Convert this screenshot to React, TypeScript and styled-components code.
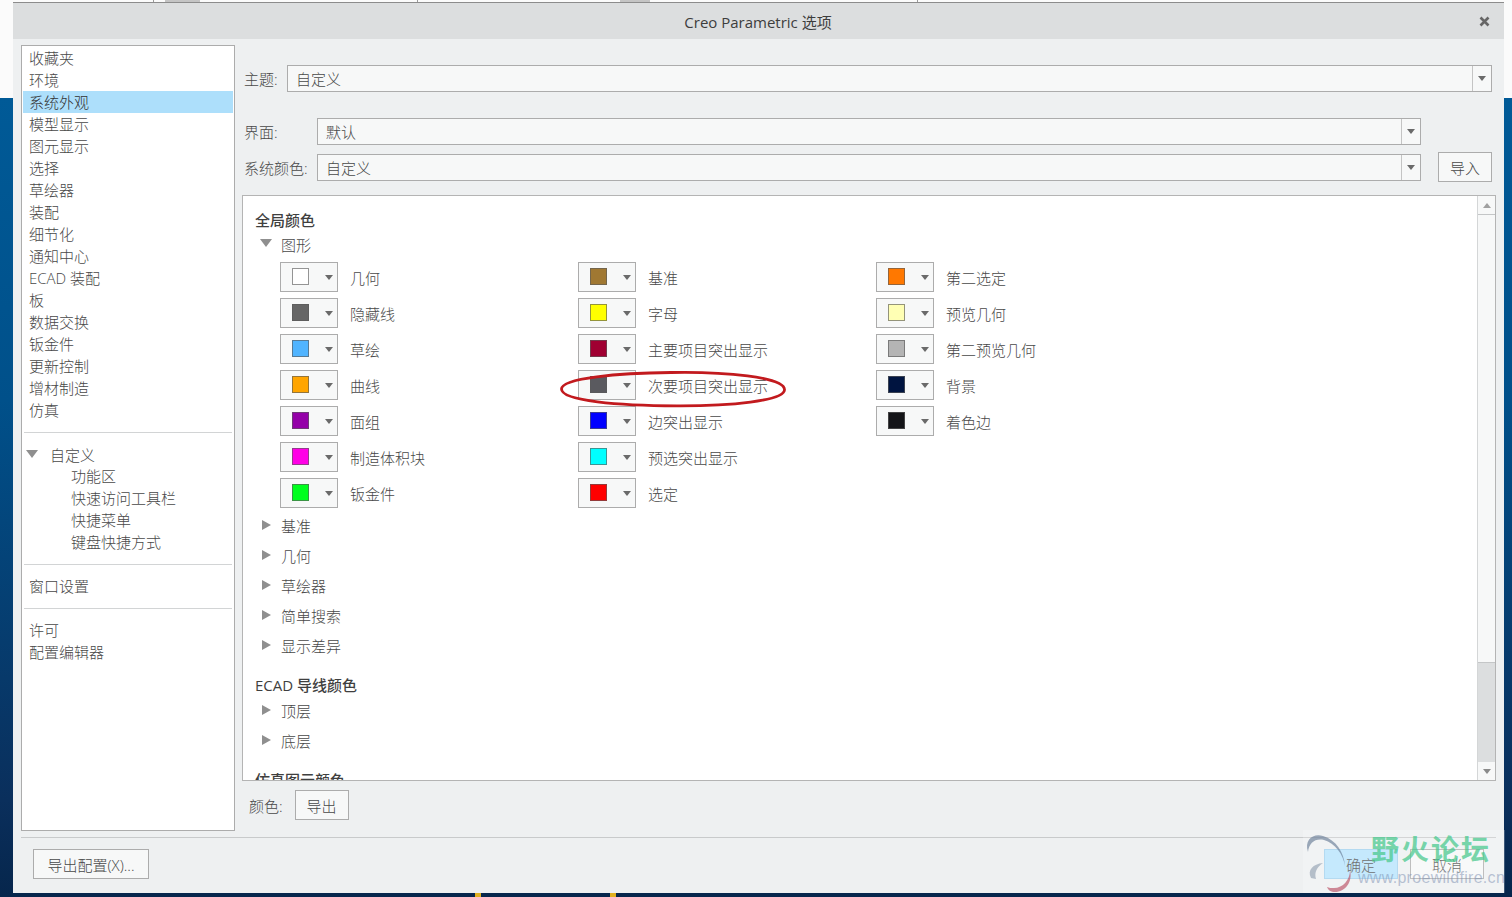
import React from "react";
import styled, { createGlobalStyle } from "styled-components";

const FONT = `"Open Sans", "Noto Sans CJK SC", "Noto Sans", sans-serif`;

const Global = createGlobalStyle`
  html, body { margin: 0; padding: 0; background: #fff; }
  #root { width: 1512px; height: 897px; overflow: hidden; }
  * { box-sizing: border-box; }
`;

const Desktop = styled.div`
  width: 1512px;
  height: 897px;
  padding: 2px 8px 4px 13px;
  position: relative;
  overflow: hidden;
  font-family: ${FONT};
  font-weight: 300;
  font-size: 15px;
  color: #484848;
  background:
    linear-gradient(#9a9a9a, #9a9a9a) 153px 0 / 1px 2px no-repeat,
    linear-gradient(#c4c4c4, #c4c4c4) 165px 0 / 35px 2px no-repeat,
    linear-gradient(#9a9a9a, #9a9a9a) 417px 0 / 1px 2px no-repeat,
    linear-gradient(#c4c4c4, #c4c4c4) 620px 0 / 30px 2px no-repeat,
    linear-gradient(#9a9a9a, #9a9a9a) 917px 0 / 1px 2px no-repeat,
    linear-gradient(#e0b020, #e0b020) 475px 893px / 6px 4px no-repeat,
    linear-gradient(#e0b020, #e0b020) 610px 893px / 6px 4px no-repeat,
    linear-gradient(#fbfbfb 0, #fbfbfb 98px, #005a97 98px, #00508a 400px, #0a2f5c 800px, #06264c 897px);
`;

const Dialog = styled.div`
  width: 1491px;
  height: 891px;
  background: #eef0f1;
  border-top: 1px solid #8c8c8c;
  display: flex;
  flex-direction: column;
`;

const TitleBar = styled.div`
  height: 36px;
  flex: none;
  background: #dcdedf;
  display: flex;
  align-items: center;
  justify-content: center;
  position: relative;
  color: #3d3d3d;
  font-weight: 400;
  font-size: 15px;
  padding-right: 1px;
`;

const CloseIcon = styled.svg`
  position: absolute;
  right: 14px;
  top: 13px;
  width: 11px;
  height: 11px;
`;

const Body = styled.div`
  flex: none;
  height: 786px;
  margin-top: 6px;
  padding: 0 8px;
  display: grid;
  grid-template-columns: 214px 1fr;
  column-gap: 7px;
`;

const Sidebar = styled.nav`
  background: #fff;
  border: 1px solid #acacac;
  padding: 1px;
  display: flex;
  flex-direction: column;
`;

const NavItem = styled.div<{ $level?: number; $selected?: boolean }>`
  height: 22px;
  flex: none;
  line-height: 22px;
  padding-left: ${(p) => (p.$level === 2 ? 48 : p.$level === 1 ? 27 : 6)}px;
  background: ${(p) => (p.$selected ? "#addffb" : "transparent")};
  color: ${(p) => (p.$selected ? "#333" : "#484848")};
  white-space: nowrap;
  position: relative;
`;

const NavParent = styled(NavItem)`
  height: 21px;
  margin-top: 1px;
`;

const NavRule = styled.div`
  flex: none;
  height: 1px;
  background: #d2d4d5;
  margin: 11px 1px 10px 1px;
`;

const Caret = styled.span<{ $left?: number }>`
  position: absolute;
  left: ${(p) => p.$left ?? 3}px;
  top: 6px;
  width: 0;
  height: 0;
  border-left: 6px solid transparent;
  border-right: 6px solid transparent;
  border-top: 8px solid #8f8f8f;
`;

const Main = styled.section`
  display: flex;
  flex-direction: column;
  min-width: 0;
`;

const FieldRow = styled.div<{ $top: number; $labelWidth: number; $right?: number }>`
  display: grid;
  grid-template-columns: ${(p) => p.$labelWidth}px 1fr auto;
  align-items: center;
  margin-top: ${(p) => p.$top}px;
  padding-left: 2px;
  margin-right: ${(p) => p.$right ?? 4}px;
  height: 27px;
  flex: none;
`;

const Label = styled.span`
  white-space: nowrap;
`;

const Select = styled.div`
  height: 27px;
  border: 1px solid #acacac;
  background: #f7f8f8;
  display: flex;
  align-items: center;
  padding-left: 8px;
  position: relative;
`;

const SelectArrow = styled.span`
  position: absolute;
  right: 0;
  top: 0;
  bottom: 0;
  width: 19px;
  border-left: 1px solid #c4c4c4;
  display: flex;
  align-items: center;
  justify-content: center;
  &::after {
    content: "";
    border-left: 4.5px solid transparent;
    border-right: 4.5px solid transparent;
    border-top: 5px solid #6a6a6a;
  }
`;

const Button = styled.button<{ $w: number; $primary?: boolean }>`
  width: ${(p) => p.$w}px;
  height: 30px;
  border: 1px solid ${(p) => (p.$primary ? "#9fd0ee" : "#acacac")};
  background: ${(p) => (p.$primary ? "#b5e3fd" : "#f7f8f8")};
  font: inherit;
  color: #484848;
  padding: 0;
  white-space: nowrap;
`;

const ImportButton = styled(Button)`
  margin-left: 17px;
`;

const Panel = styled.div`
  flex: none;
  height: 586px;
  margin-top: 16px;
  width: 1254px;
  border: 1px solid #b4b4b4;
  background: #fff;
  position: relative;
  display: grid;
  grid-template-columns: 1fr 18px;
  overflow: hidden;
`;

const Tree = styled.div`
  padding: 13px 0 0 12px;
  overflow: hidden;
  min-width: 0;
`;

const Heading = styled.div<{ $top?: number; $h?: number }>`
  font-weight: 500;
  height: ${(p) => p.$h ?? 23}px;
  line-height: ${(p) => p.$h ?? 22}px;
  color: #3f3f3f;
  margin-top: ${(p) => p.$top ?? 0}px;
  white-space: nowrap;
`;

const TreeRow = styled.div<{ $h?: number; $open?: boolean }>`
  height: ${(p) => p.$h ?? 30}px;
  display: flex;
  align-items: center;
  padding-left: ${(p) => (p.$open ? 5 : 7)}px;
  gap: ${(p) => (p.$open ? 9 : 8)}px;
`;

const OpenArrow = styled.span`
  width: 0;
  height: 0;
  border-left: 6px solid transparent;
  border-right: 6px solid transparent;
  border-top: 8px solid #8f8f8f;
  margin-top: -2px;
`;

const ClosedArrow = styled.span`
  width: 0;
  height: 0;
  border-top: 5.5px solid transparent;
  border-bottom: 5.5px solid transparent;
  border-left: 9px solid #8f8f8f;
  margin-top: -1px;
  margin-right: 2px;
`;

const ColorGrid = styled.div`
  display: grid;
  grid-template-columns: repeat(3, 298px);
  grid-template-rows: repeat(7, 30px);
  grid-auto-flow: column;
  row-gap: 6px;
  margin: 6px 0 2px 25px;
`;

const ColorItem = styled.div`
  display: flex;
  align-items: center;
  gap: 12px;
`;

const ColorButton = styled.div`
  width: 58px;
  height: 30px;
  border: 1px solid #acacac;
  background: #f7f8f8;
  display: flex;
  align-items: center;
  padding-left: 11px;
  position: relative;
  &::after {
    content: "";
    position: absolute;
    right: 4px;
    top: 12px;
    border-left: 4.5px solid transparent;
    border-right: 4.5px solid transparent;
    border-top: 5px solid #6a6a6a;
  }
`;

const Swatch = styled.span<{ $c: string }>`
  width: 17px;
  height: 17px;
  margin-top: -1px;
  background: ${(p) => p.$c};
  border: 1px solid rgba(90, 90, 90, 0.65);
`;

const Scrollbar = styled.div`
  display: flex;
  flex-direction: column;
  border-left: 1px solid #d4d6d7;
  background: #dcdedf;
`;

const ScrollEnd = styled.div<{ $up?: boolean }>`
  height: 18px;
  flex: none;
  background: #f7f8f8;
  display: flex;
  align-items: center;
  justify-content: center;
  &::after {
    content: "";
    border-left: 4px solid transparent;
    border-right: 4px solid transparent;
    ${(p) => (p.$up ? "border-bottom: 5px solid #a0a0a0;" : "border-top: 5px solid #8a8a8a;")}
  }
`;

const ScrollThumb = styled.div`
  height: 449px;
  flex: none;
  background: #f7f8f8;
  border-top: 1px solid #c4c6c7;
  border-bottom: 1px solid #c4c6c7;
`;

const ScrollTrack = styled.div`
  flex: 1;
`;

const Ellipse = styled.svg`
  position: absolute;
  left: 316px;
  top: 174px;
  width: 228px;
  height: 38px;
  pointer-events: none;
`;

const ExportRow = styled.div`
  display: flex;
  align-items: center;
  margin-top: 9px;
  padding-left: 7px;
  gap: 12px;
`;

const ExportButton = styled(Button)`
  width: 54px;
  height: 30px;
`;

const Footer = styled.footer`
  flex: 1;
  margin: 6px 8px 0 8px;
  border-top: 1px solid #c8cacb;
  display: flex;
  align-items: flex-start;
  padding: 11px 12px 0 12px;
  gap: 12px;
`;

const Spacer = styled.div`
  flex: 1;
`;

const Watermark = styled.div`
  position: absolute;
  left: 1303px;
  top: 830px;
  width: 202px;
  height: 63px;
  background: rgba(255, 255, 255, 0.22);
  pointer-events: none;
`;

const WatermarkLogo = styled.svg`
  position: absolute;
  left: 0;
  top: 0;
  width: 70px;
  height: 63px;
`;

const WatermarkTitle = styled.div`
  position: absolute;
  left: 68px;
  top: 0px;
  font-family: "Noto Sans CJK SC", sans-serif;
  font-weight: 700;
  font-size: 28px;
  line-height: 36px;
  letter-spacing: 2px;
  color: rgba(70, 200, 140, 0.72);
  white-space: nowrap;
`;

const WatermarkUrl = styled.div`
  position: absolute;
  left: 55px;
  top: 38px;
  font-family: "Liberation Sans", sans-serif;
  font-size: 16px;
  line-height: 20px;
  letter-spacing: 0.3px;
  color: rgba(120, 140, 175, 0.5);
  white-space: nowrap;
`;

const navA = ["收藏夹", "环境", "系统外观", "模型显示", "图元显示", "选择", "草绘器", "装配", "细节化", "通知中心", "ECAD 装配", "板", "数据交换", "钣金件", "更新控制", "增材制造", "仿真"];
const navB = ["功能区", "快速访问工具栏", "快捷菜单", "键盘快捷方式"];

const colors: [string, string][] = [
  ["#ffffff", "几何"], ["#666666", "隐藏线"], ["#50b4ff", "草绘"], ["#ffa500", "曲线"], ["#9400a8", "面组"], ["#ff00e6", "制造体积块"], ["#00ff1e", "钣金件"],
  ["#a07832", "基准"], ["#ffff00", "字母"], ["#a00032", "主要项目突出显示"], ["#5a5a5f", "次要项目突出显示"], ["#0000ff", "边突出显示"], ["#00ffff", "预选突出显示"], ["#ff0000", "选定"],
  ["#ff7800", "第二选定"], ["#ffffb4", "预览几何"], ["#b4b4b4", "第二预览几何"], ["#001440", "背景"], ["#141418", "着色边"],
];

const closedA = ["基准", "几何", "草绘器", "简单搜索", "显示差异"];
const closedB = ["顶层", "底层"];

export default function App() {
  return (
    <Desktop>
      <Global />
      <Dialog>
        <TitleBar>
          Creo Parametric 选项
          <CloseIcon viewBox="0 0 11 11">
            <path d="M1.5 1.5 L9.5 9.5 M9.5 1.5 L1.5 9.5" stroke="#666" strokeWidth="2.6" fill="none" />
          </CloseIcon>
        </TitleBar>
        <Body>
          <Sidebar>
            {navA.map((n, i) => (
              <NavItem key={n} $selected={i === 2}>{n}</NavItem>
            ))}
            <NavRule />
            <NavParent $level={1}><Caret />自定义</NavParent>
            {navB.map((n) => (
              <NavItem key={n} $level={2}>{n}</NavItem>
            ))}
            <NavRule />
            <NavItem>窗口设置</NavItem>
            <NavRule />
            <NavItem>许可</NavItem>
            <NavItem>配置编辑器</NavItem>
          </Sidebar>
          <Main>
            <FieldRow $top={20} $labelWidth={43}>
              <Label>主题:</Label>
              <Select>自定义<SelectArrow /></Select>
            </FieldRow>
            <FieldRow $top={26} $labelWidth={73} $right={75}>
              <Label>界面:</Label>
              <Select>默认<SelectArrow /></Select>
            </FieldRow>
            <FieldRow $top={7} $labelWidth={73} $right={4}>
              <Label>系统颜色:</Label>
              <Select>自定义<SelectArrow /></Select>
              <ImportButton $w={54}>导入</ImportButton>
            </FieldRow>
            <Panel>
              <Tree>
                <Heading>全局颜色</Heading>
                <TreeRow $h={24} $open><OpenArrow />图形</TreeRow>
                <ColorGrid>
                  {colors.map(([c, t]) => (
                    <ColorItem key={t}>
                      <ColorButton><Swatch $c={c} /></ColorButton>
                      {t}
                    </ColorItem>
                  ))}
                </ColorGrid>
                {closedA.map((t) => (
                  <TreeRow key={t}><ClosedArrow />{t}</TreeRow>
                ))}
                <Heading $top={16} $h={19}>ECAD 导线颜色</Heading>
                {closedB.map((t) => (
                  <TreeRow key={t}><ClosedArrow />{t}</TreeRow>
                ))}
                <Heading $top={14}>仿真图元颜色</Heading>
              </Tree>
              <Scrollbar>
                <ScrollEnd $up />
                <ScrollThumb />
                <ScrollTrack />
                <ScrollEnd />
              </Scrollbar>
              <Ellipse viewBox="0 0 228 38">
                <path d="M112 2.5 C165 1.5 225 7 225.5 19.5 C226 31 170 36 118 35.8 C60 35.6 2.5 31 2.5 19 C2.5 8 60 3 112 2.5 Z" fill="none" stroke="#c21a1e" strokeWidth="2.8" />
              </Ellipse>
            </Panel>
            <ExportRow>
              <Label>颜色:</Label>
              <ExportButton $w={54}>导出</ExportButton>
            </ExportRow>
          </Main>
        </Body>
        <Footer>
          <Button $w={116}>导出配置(X)...</Button>
          <Spacer />
          <Button $w={74} $primary>确定</Button>
          <Button $w={74}>取消</Button>
        </Footer>
      </Dialog>
      <Watermark>
        <WatermarkLogo viewBox="0 0 70 63">
          <path d="M5 22 C1 10 10 3 20 6 C33 10 41 22 42 36 C40 24 32 13 21 10 C12 8 6 13 5 22 Z" fill="rgba(105,125,150,0.65)" />
          <path d="M8 48 C4 40 10 34 20 33 C14 37 11 42 13 49 Z" fill="rgba(130,145,165,0.55)" />
          <path d="M31 58 C40 58 47 50 47 40 C50 52 42 62 32 62 C28 62 25 60 24 57 C26 58 28 58 31 58 Z" fill="rgba(190,90,110,0.7)" />
        </WatermarkLogo>
        <WatermarkTitle>野火论坛</WatermarkTitle>
        <WatermarkUrl>www.proewildfire.cn</WatermarkUrl>
      </Watermark>
    </Desktop>
  );
}
